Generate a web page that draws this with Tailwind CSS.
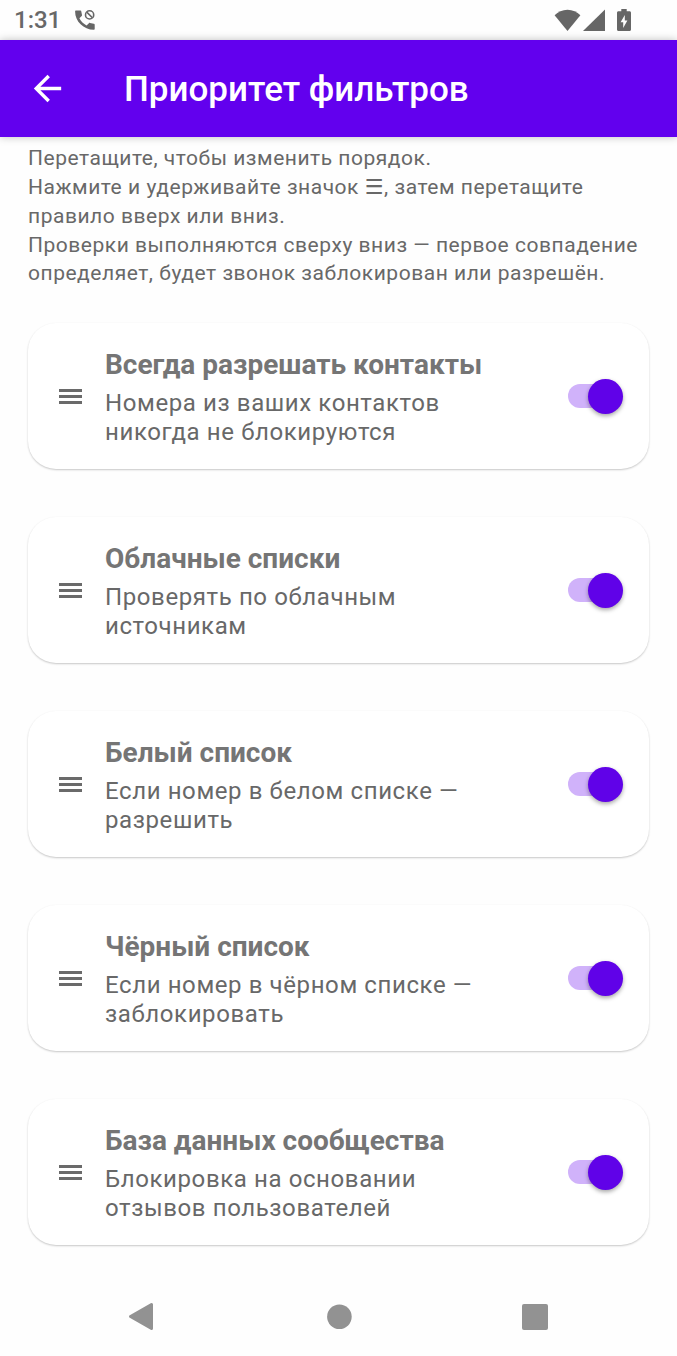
<!DOCTYPE html>
<html lang="ru">
<head>
    <meta charset="UTF-8" />
    <meta name="viewport" content="width=device-width, initial-scale=1.0" />
    <title>Приоритет фильтров</title>
    <script src="https://cdn.jsdelivr.net/npm/@tailwindcss/browser@4"></script>
</head>

<body class="bg-[#fefefe] min-h-screen flex flex-col font-['Roboto','DejaVu_Sans',sans-serif] text-[#686868]">

  <!-- Status bar -->
  <div class="h-10 pl-3.5 pr-[46px] flex items-center justify-between">
    <div class="flex items-center gap-3.5">
      <span class="text-2xl font-medium">1:31</span>
      <svg class="size-5" viewBox="0 0 20 20" fill="none">
        <path fill="#666" d="M0.8 0.6 H5.4 C6 0.6 6.2 1 6.3 1.5 L7 5 C7.1 5.5 7 5.8 6.7 6.1 L4.4 8.3 C6 11.4 8.5 13.9 11.6 15.5 L13.9 13.2 C14.2 12.9 14.6 12.8 15 12.9 L18.8 13.7 C19.4 13.8 19.7 14.1 19.7 14.7 V19 C19.7 19.5 19.4 19.8 18.9 19.8 C8.6 19.8 0.1 11.4 0.1 1.5 C0.1 1 0.3 0.6 0.8 0.6 Z" />
        <circle cx="14.6" cy="4.9" r="4.1" stroke="#666" stroke-width="1.6" />
        <path stroke="#666" stroke-width="1.6" d="M11.8 2.1 L17.4 7.7" />
      </svg>
    </div>
    <div class="flex items-center">
      <svg class="w-[27px] h-[22px]" viewBox="0 0 27 22" fill="#666">
        <path d="M0.6 6.3 C4 2.9 8.4 0.8 13.5 0.8 C18.6 0.8 23 2.9 26.4 6.3 L13.5 22 Z" />
      </svg>
      <svg class="w-[22px] h-[22px] ml-0.5" viewBox="0 0 22 22" fill="#666">
        <path d="M0 22 L22 0.5 V22 Z" />
      </svg>
      <svg class="w-3.5 h-[22px] ml-3" viewBox="0 0 14 22" fill="#666">
        <path fill-rule="evenodd" d="M4.3 0 H9.7 V2.2 H12.5 C13.4 2.2 14 2.8 14 3.7 V20.5 C14 21.4 13.4 22 12.5 22 H1.5 C0.6 22 0 21.4 0 20.5 V3.7 C0 2.8 0.6 2.2 1.5 2.2 H4.3 Z M7.8 6 L3.6 13.3 H6.2 V19 L10.4 11.6 H7.8 Z" />
      </svg>
    </div>
  </div>

  <!-- App bar -->
  <header class="h-[97px] bg-[#6200ee] text-white pl-[27px] flex items-center gap-14 shadow-[0_0_8px_rgba(0,0,0,0.25)]">
    <button type="button" aria-label="Назад" class="size-[41px]">
      <svg class="size-[41px]" viewBox="0 0 24 24" fill="currentColor">
        <path d="M20 11H7.83l5.59-5.59L12 4l-8 8 8 8 1.41-1.41L7.83 13H20v-2z" />
      </svg>
    </button>
    <h1 class="pt-1 text-[35px] font-medium">Приоритет фильтров</h1>
  </header>

  <main class="flex-1 px-7 pt-[7px]">
    <div class="text-[21px] leading-[29px] tracking-wide">
      <p>Перетащите, чтобы изменить порядок.</p>
      <p>Нажмите и удерживайте значок ☰, затем перетащите правило вверх или вниз.</p>
      <p class="leading-7">Проверки выполняются сверху вниз — первое совпадение определяет, будет звонок заблокирован или разрешён.</p>
    </div>

    <!-- Rules -->
    <ul id="rules" class="mt-9 flex flex-col gap-12"></ul>
  </main>

  <!-- Navigation bar -->
  <nav class="h-20 px-[127px] flex items-center justify-between">
    <button type="button" aria-label="Назад">
      <svg class="size-7" viewBox="0 0 28 28" fill="#929292" stroke="#929292" stroke-width="3" stroke-linejoin="round">
        <path d="M3.5 14.5 L24.5 2.5 V26.5 Z" />
      </svg>
    </button>
    <button type="button" aria-label="Домой">
      <svg class="size-7" viewBox="0 0 28 28" fill="#929292"><circle cx="14.4" cy="14.7" r="12.3" /></svg>
    </button>
    <button type="button" aria-label="Недавние">
      <svg class="size-7" viewBox="0 0 28 28" fill="#929292"><rect y="2" width="26" height="26" rx="2" /></svg>
    </button>
  </nav>

  <template id="rule">
    <li class="min-h-[146px] pl-[31px] pr-[26px] flex items-center rounded-[28px] bg-white shadow-[0_1px_2px_rgba(0,0,0,0.22)]">
      <svg class="w-[23px] h-[15px] shrink-0" viewBox="0 0 23 15" fill="#6a6a6a">
        <path d="M0 0H23V3H0zM0 6H23V9H0zM0 12H23V15H0z" />
      </svg>
      <div class="flex-1 ml-[23px] mr-12">
        <h2 class="text-[28px] leading-10 font-bold text-[#757575]"></h2>
        <p class="mt-1 text-2xl leading-[29px] tracking-wide"></p>
      </div>
      <label class="relative w-[55px] h-[35px] shrink-0 flex items-center">
        <input type="checkbox" role="switch" checked class="peer appearance-none w-12 h-6 rounded-full bg-gray-300 checked:bg-[#d0b2fa]" />
        <span class="absolute top-0 left-0 size-[35px] rounded-full bg-gray-100 shadow-[0_2px_4px_rgba(0,0,0,0.35)] peer-checked:left-5 peer-checked:bg-[#6002e8]"></span>
      </label>
    </li>
  </template>

  <script>
    const rules = [
      ["Всегда разрешать контакты", "Номера из ваших контактов никогда не блокируются"],
      ["Облачные списки", "Проверять по облачным источникам"],
      ["Белый список", "Если номер в белом списке — разрешить"],
      ["Чёрный список", "Если номер в чёрном списке — заблокировать"],
      ["База данных сообщества", "Блокировка на основании отзывов пользователей"]
    ];

    const list = document.getElementById("rules");
    const template = document.getElementById("rule");

    rules.forEach(([title, text]) => {
      const item = template.content.cloneNode(true);
      item.querySelector("h2").textContent = title;
      item.querySelector("p").textContent = text;
      item.querySelector("input").setAttribute("aria-label", title);
      list.appendChild(item);
    });
  </script>
</body>
</html>
